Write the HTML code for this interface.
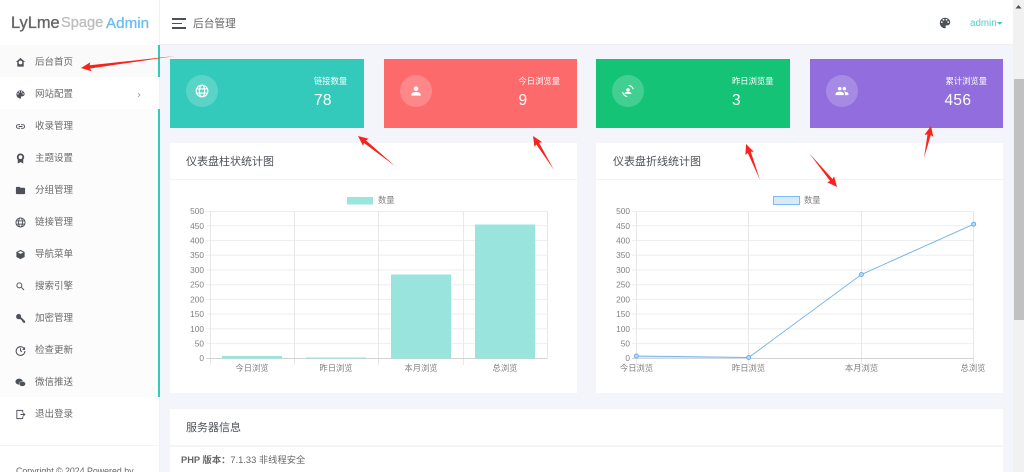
<!DOCTYPE html>
<html><head><meta charset="utf-8">
<style>
html,body{margin:0;padding:0;width:1024px;height:472px;overflow:hidden;background:#f4f5fa;font-family:"Liberation Sans","Noto Sans CJK SC",sans-serif;}
body{filter:blur(.3px)}
div,span{position:absolute;white-space:nowrap;box-sizing:border-box}
.m{left:35px;font-size:9.5px;line-height:16px;color:#6a6a6a}
.i{position:absolute;left:15px;width:11px;height:11px;fill:#4d5259}
.card{top:59px;height:68.5px;width:193.5px}
.circ{left:16px;top:16px;width:32px;height:32px;border-radius:50%;background:rgba(255,255,255,.2)}
.circ svg{position:absolute;left:9px;top:9px;width:14px;height:14px;fill:#fff}
.lb{top:16px;font-size:8.3px;line-height:12px;color:#fff}
.nm{top:32px;font-size:15.5px;line-height:20px;color:#fff;letter-spacing:.3px}
.p{background:#fff}
.t{left:16px;top:12px;font-size:11px;line-height:15px;color:#4d5259}
.hl{left:0;right:0;top:36px;height:1px;background:#f3f4f7}
svg text{font-family:"Liberation Sans","Noto Sans CJK SC",sans-serif;font-size:8.3px;fill:#808080}
</style></head><body>
<div style="left:0;top:0;width:160px;height:472px;background:#fff;border-right:1px solid #f0f1f5"></div>
<div style="left:160px;top:0;width:853px;height:45px;background:#fff;border-bottom:1px solid #f0f1f6"></div>

<span style="left:11px;top:12px;font-size:16.4px;line-height:22px;color:#666;-webkit-text-stroke:.35px #666">LyLme</span>
<span style="left:61px;top:12px;font-size:14.6px;line-height:23px;color:#bdbdbd;-webkit-text-stroke:.3px #bdbdbd">Spage</span>
<span style="left:106px;top:12px;font-size:15.2px;line-height:23px;color:#6bbcf2;-webkit-text-stroke:.3px #6bbcf2">Admin</span>

<div style="left:0;top:45px;width:160px;height:32px;background:#fafafa"></div>
<div style="left:0;top:109px;width:160px;height:288px;background:#fcfcfd"></div>
<div style="left:158px;top:45px;width:2px;height:32px;background:#33cabb"></div>
<div style="left:158px;top:109px;width:2px;height:288px;background:#33cabb"></div>

<svg class="i" style="top:57px" viewBox="0 0 24 24"><path d="M12 2L2 11h3v10h14V11h3zM12 8a4 4 0 1 1 0 8 4 4 0 0 1 0-8z" fill-rule="evenodd"/></svg>
<span class="m" style="top:55px">后台首页</span>
<svg class="i" style="top:89px" viewBox="0 0 24 24"><path d="M17.5,12A1.5,1.5 0 0,1 16,10.5A1.5,1.5 0 0,1 17.5,9A1.5,1.5 0 0,1 19,10.5A1.5,1.5 0 0,1 17.5,12M14.5,8A1.5,1.5 0 0,1 13,6.5A1.5,1.5 0 0,1 14.5,5A1.5,1.5 0 0,1 16,6.5A1.5,1.5 0 0,1 14.5,8M9.5,8A1.5,1.5 0 0,1 8,6.5A1.5,1.5 0 0,1 9.5,5A1.5,1.5 0 0,1 11,6.5A1.5,1.5 0 0,1 9.5,8M6.5,12A1.5,1.5 0 0,1 5,10.5A1.5,1.5 0 0,1 6.5,9A1.5,1.5 0 0,1 8,10.5A1.5,1.5 0 0,1 6.5,12M12,3A9,9 0 0,0 3,12A9,9 0 0,0 12,21A1.5,1.5 0 0,0 13.5,19.5C13.5,19.11 13.35,18.76 13.11,18.5C12.88,18.23 12.73,17.88 12.73,17.5A1.5,1.5 0 0,1 14.23,16H16A5,5 0 0,0 21,11C21,6.58 16.97,3 12,3Z"/></svg>
<span class="m" style="top:87px">网站配置</span>
<svg style="position:absolute;left:137px;top:92px;width:4px;height:6px" viewBox="0 0 4 6"><path d="M1 1l2 2-2 2" fill="none" stroke="#999" stroke-width=".8"/></svg>
<svg class="i" style="top:121px" viewBox="0 0 24 24"><path d="M3.9,12C3.9,10.29 5.29,8.9 7,8.9H11V7H7A5,5 0 0,0 2,12A5,5 0 0,0 7,17H11V15.1H7C5.29,15.1 3.9,13.71 3.9,12M8,13H16V11H8V13M17,7H13V8.9H17C18.71,8.9 20.1,10.29 20.1,12C20.1,13.71 18.71,15.1 17,15.1H13V17H17A5,5 0 0,0 22,12A5,5 0 0,0 17,7Z"/></svg>
<span class="m" style="top:119px">收录管理</span>
<svg class="i" style="top:153px" viewBox="0 0 24 24"><path d="M12 1a8 8 0 0 0-6 13.3V23l6-3 6 3v-8.700A8 8 0 0 0 12 1zm0 4a4 4 0 1 1 0 8 4 4 0 0 1 0-8z" fill-rule="evenodd"/></svg>
<span class="m" style="top:151px">主题设置</span>
<svg class="i" style="top:185px" viewBox="0 0 24 24"><path d="M10,4H4C2.89,4 2,4.89 2,6V18A2,2 0 0,0 4,20H20A2,2 0 0,0 22,18V8C22,6.89 21.1,6 20,6H12L10,4Z"/></svg>
<span class="m" style="top:183px">分组管理</span>
<svg class="i" style="top:217px" viewBox="0 0 24 24"><g fill="none" stroke="#4d5259" stroke-width="2"><circle cx="12" cy="12" r="10"/><ellipse cx="12" cy="12" rx="4.500" ry="10"/><path d="M2.500 8.500h19M2.500 15.500h19"/></g></svg>
<span class="m" style="top:215px">链接管理</span>
<svg class="i" style="top:249px" viewBox="0 0 24 24"><path d="M12 2L3 6.500v11L12 22l9-4.500v-11zM12 4.500l6 3-6 3-6-3z" fill-rule="evenodd"/></svg>
<span class="m" style="top:247px">导航菜单</span>
<svg class="i" style="top:281px" viewBox="0 0 24 24"><path d="M9.500,3A6.500,6.500 0 0,1 16,9.500C16,11.110 15.410,12.590 14.440,13.730L14.710,14H15.500L20.500,19L19,20.500L14,15.500V14.710L13.730,14.440C12.590,15.410 11.110,16 9.500,16A6.500,6.500 0 0,1 3,9.500A6.500,6.500 0 0,1 9.500,3M9.500,5C7,5 5,7 5,9.500C5,12 7,14 9.500,14C12,14 14,12 14,9.500C14,7 12,5 9.500,5Z"/></svg>
<span class="m" style="top:279px">搜索引擎</span>
<svg class="i" style="top:313px" viewBox="0 0 24 24"><path d="M2.500 7.500a5.500 5.500 0 0 1 9.800-3.400c1 1.300 1.200 3 .7 4.500l9 9v4h-4v-2.500h-2.500V17l-4.500-4.300a5.500 5.500 0 0 1-8.500-5.200z"/></svg>
<span class="m" style="top:311px">加密管理</span>
<svg class="i" style="top:345px" viewBox="0 0 24 24"><g fill="none" stroke="#4d5259" stroke-width="2.300"><path d="M20.500 9A9.500 9.500 0 1 0 21.500 13"/><path d="M12 7v5.500l3.500 2"/></g><path d="M22 4v6.500h-6.500z"/></svg>
<span class="m" style="top:343px">检查更新</span>
<svg class="i" style="top:377px" viewBox="0 0 24 24"><ellipse cx="9" cy="10" rx="8" ry="6.500"/><ellipse cx="16" cy="15" rx="7" ry="5.500" stroke="#fcfcfd" stroke-width="1"/></svg>
<span class="m" style="top:375px">微信推送</span>
<svg class="i" style="top:409px" viewBox="0 0 24 24"><path d="M4 2h12a2 2 0 0 1 2 2v4h-2V4H5v16h11v-4h2v4a2 2 0 0 1-2 2H4a1 1 0 0 1-1-1V3a1 1 0 0 1 1-1zM12 11h6V7.500l5 4.500-5 4.500V13h-6z"/></svg>
<span class="m" style="top:407px">退出登录</span>

<div style="left:0;top:445px;width:160px;height:1px;background:#f3f4f7"></div>
<span style="left:16px;top:465px;font-size:8.800px;line-height:12px;color:#666">Copyright © 2024 Powered by</span>

<div style="left:172px;top:18px;width:14px;height:1.500px;background:#4d5259"></div>
<div style="left:172px;top:22.500px;width:10px;height:1.500px;background:#4d5259"></div>
<div style="left:172px;top:27px;width:14px;height:1.500px;background:#4d5259"></div>
<span style="left:193px;top:16px;font-size:10.700px;line-height:16px;color:#666">后台管理</span>
<svg style="position:absolute;left:938px;top:16px;width:14px;height:14px;fill:#4d5259" viewBox="0 0 24 24"><path d="M17.500,12A1.500,1.500 0 0,1 16,10.500A1.500,1.500 0 0,1 17.500,9A1.500,1.500 0 0,1 19,10.500A1.500,1.500 0 0,1 17.500,12M14.500,8A1.500,1.500 0 0,1 13,6.500A1.500,1.500 0 0,1 14.500,5A1.500,1.500 0 0,1 16,6.500A1.500,1.500 0 0,1 14.500,8M9.500,8A1.500,1.500 0 0,1 8,6.500A1.500,1.500 0 0,1 9.500,5A1.500,1.500 0 0,1 11,6.500A1.500,1.500 0 0,1 9.500,8M6.500,12A1.500,1.500 0 0,1 5,10.500A1.500,1.500 0 0,1 6.500,9A1.500,1.500 0 0,1 8,10.500A1.500,1.500 0 0,1 6.500,12M12,3A9,9 0 0,0 3,12A9,9 0 0,0 12,21A1.500,1.500 0 0,0 13.500,19.500C13.500,19.110 13.350,18.760 13.110,18.500C12.880,18.230 12.730,17.880 12.730,17.500A1.500,1.500 0 0,1 14.230,16H16A5,5 0 0,0 21,11C21,6.580 16.970,3 12,3Z"/></svg>
<span style="left:970px;top:16.500px;font-size:9.800px;line-height:14px;color:#52d2c5">admin</span>

<div class="card" style="left:170px;background:#33cabb">
  <div class="circ"><svg viewBox="0 0 24 24"><g fill="none" stroke="#fff" stroke-width="2"><circle cx="12" cy="12" r="10"/><ellipse cx="12" cy="12" rx="4.500" ry="10"/><path d="M2.500 8.500h19M2.500 15.500h19"/></g></svg></div>
  <span class="lb" style="left:144px">链接数量</span><span class="nm" style="left:144px">78</span>
</div>
<div class="card" style="left:383.500px;background:#fd6a6c">
  <div class="circ"><svg viewBox="0 0 24 24"><path d="M12,4A4,4 0 0,1 16,8A4,4 0 0,1 12,12A4,4 0 0,1 8,8A4,4 0 0,1 12,4M12,14C16.420,14 20,15.790 20,18V20H4V18C4,15.790 7.580,14 12,14Z"/></svg></div>
  <span class="lb" style="left:135px">今日浏览量</span><span class="nm" style="left:135px">9</span>
</div>
<div class="card" style="left:596px;background:#15c377">
  <div class="circ"><svg viewBox="0 0 24 24"><circle cx="12" cy="10" r="3"/><path d="M6 17c0-2.500 3-3.500 6-3.500s6 1 6 3.500z"/><path d="M13 2.500a9.500 9.500 0 0 1 8 6.500M2.800 14a9.500 9.500 0 0 0 8 7.500" fill="none" stroke="#fff" stroke-width="2"/></svg></div>
  <span class="lb" style="left:136px">昨日浏览量</span><span class="nm" style="left:136px">3</span>
</div>
<div class="card" style="left:809.500px;background:#926dde">
  <div class="circ"><svg viewBox="0 0 24 24"><path d="M16,13C15.710,13 15.380,13 15.030,13.050C16.190,13.890 17,15 17,16.500V19H23V16.500C23,14.170 18.330,13 16,13M8,13C5.670,13 1,14.170 1,16.500V19H15V16.500C15,14.170 10.330,13 8,13M8,11A3,3 0 0,0 11,8A3,3 0 0,0 8,5A3,3 0 0,0 5,8A3,3 0 0,0 8,11M16,11A3,3 0 0,0 19,8A3,3 0 0,0 16,5A3,3 0 0,0 13,8A3,3 0 0,0 16,11Z"/></svg></div>
  <span class="lb" style="left:136px">累计浏览量</span><span class="nm" style="left:135px">456</span>
</div>

<div class="p" style="left:170px;top:143px;width:407px;height:250px"><span class="t">仪表盘柱状统计图</span><div class="hl"></div></div>
<div class="p" style="left:596px;top:143px;width:407px;height:250px"><span class="t" style="left:17px">仪表盘折线统计图</span><div class="hl"></div></div>
<div class="p" style="left:170px;top:409px;width:833px;height:70px"><span class="t">服务器信息</span><div class="hl" style="height:1.500px"></div>
<span style="left:11px;top:44px;font-size:9.300px;line-height:14px;color:#666"><b>PHP 版本：</b>7.1.33 非线程安全</span></div>

<svg style="position:absolute;left:0;top:0" width="1024" height="472" viewBox="0 0 1024 472">
 <!-- bar chart -->
 <rect x="347" y="197" width="26" height="7.500" fill="#9ae5dd"/><text x="378" y="203">数量</text>
 <path d="M206 211.500H547.500M206 225.700H547.500M206 240.500H547.500M206 255.200H547.500M206 269.900H547.500M206 284.700H547.500M206 299.400H547.500M206 314.100H547.500M206 328.800H547.500M206 343.600H547.500" stroke="#eeeeee" stroke-width="1" fill="none"/>
 <path d="M210.500 211V365M294.500 211V365M378.500 211V365M463.500 211V365M547.500 211V358" stroke="#e8e8e8" stroke-width="1" fill="none"/>
 <path d="M206 358.500H547.500" stroke="#d2d2d2" stroke-width="1"/>
 <rect x="222" y="356" width="60" height="2.600" fill="#99e4dc"/>
 <rect x="306" y="357.500" width="60" height="1" fill="#99e4dc"/>
 <rect x="391" y="274.500" width="60" height="84" fill="#99e4dc"/>
 <rect x="475" y="224.500" width="60" height="134" fill="#99e4dc"/>
 <g text-anchor="end"><text x="204" y="214">500</text><text x="204" y="229">450</text><text x="204" y="243.500">400</text><text x="204" y="258">350</text><text x="204" y="273">300</text><text x="204" y="287.700">250</text><text x="204" y="302.500">200</text><text x="204" y="317">150</text><text x="204" y="332">100</text><text x="204" y="346.500">50</text><text x="204" y="361">0</text></g>
 <g text-anchor="middle"><text x="252" y="371">今日浏览</text><text x="336" y="371">昨日浏览</text><text x="421" y="371">本月浏览</text><text x="505" y="371">总浏览</text></g>

 <!-- line chart -->
 <rect x="773.500" y="196.500" width="26" height="8" fill="#d9e9f7" stroke="#7dbcf0" stroke-width="1"/><text x="804" y="203">数量</text>
 <path d="M632 211.500H974M632 225.700H974M632 240.500H974M632 255.200H974M632 269.900H974M632 284.700H974M632 299.400H974M632 314.100H974M632 328.800H974M632 343.600H974" stroke="#eeeeee" stroke-width="1" fill="none"/>
 <path d="M636.500 211V365M748.500 211V365M861.500 211V365M973.500 211V365" stroke="#e8e8e8" stroke-width="1" fill="none"/>
 <path d="M632 358.500H974" stroke="#d2d2d2" stroke-width="1"/>
 <path d="M636.300 356L748.700 357.500V358.300H636.300Z" fill="#d9e9f7"/>
 <path d="M636.300 356L748.700 357.500L861.400 274.500L973.700 224.200" fill="none" stroke="#76b5ea" stroke-width="1"/>
 <g fill="#bcdcf5" stroke="#6aaee8" stroke-width="1"><circle cx="636.300" cy="356" r="2"/><circle cx="748.700" cy="357.500" r="2"/><circle cx="861.400" cy="274.500" r="2"/><circle cx="973.700" cy="224.200" r="2"/></g>
 <g text-anchor="end"><text x="630" y="214">500</text><text x="630" y="229">450</text><text x="630" y="243.500">400</text><text x="630" y="258">350</text><text x="630" y="273">300</text><text x="630" y="287.700">250</text><text x="630" y="302.500">200</text><text x="630" y="317">150</text><text x="630" y="332">100</text><text x="630" y="346.500">50</text><text x="630" y="361">0</text></g>
 <g text-anchor="middle"><text x="636.500" y="371">今日浏览</text><text x="748.500" y="371">昨日浏览</text><text x="861.500" y="371">本月浏览</text><text x="973" y="371">总浏览</text></g>

 <!-- arrows -->
 <g fill="#f8231c">
  <polygon points="81,68 91.500,71.200 90.100,68.500 175,56 89.700,65.300 90.300,62.200"/>
  <polygon points="358,136 368.600,138.800 366,140.400 395,166 364,143 363,145.800"/>
  <polygon points="533,136 542.100,142.100 539.100,142.900 554,170 536.400,144.500 534.500,146.900"/>
  <polygon points="746,144 753.800,151.700 750.800,151.800 760,180 747.800,153 745.400,154.900"/>
  <polygon points="837,187 834.100,176.400 832.500,179 809,153 830.100,181 827.100,182.200"/>
  <polygon points="931,126 933.300,136.800 930.700,135.100 924,158 927.500,134.500 924.500,134.800"/>
 </g>
</svg>

<div style="left:1013px;top:0;width:11px;height:472px;background:#f1f1f1"></div>
<div style="left:1014px;top:79px;width:10px;height:241px;background:#c1c1c1"></div>
<svg style="position:absolute;left:0;top:0" width="1024" height="472" viewBox="0 0 1024 472">
 <polygon points="1018.500,5 1021.500,8.500 1015.500,8.500" fill="#505050"/>
 <polygon points="997,22 1002.500,22 999.750,24.800" fill="#33cabb"/>
</svg>
</body></html>
